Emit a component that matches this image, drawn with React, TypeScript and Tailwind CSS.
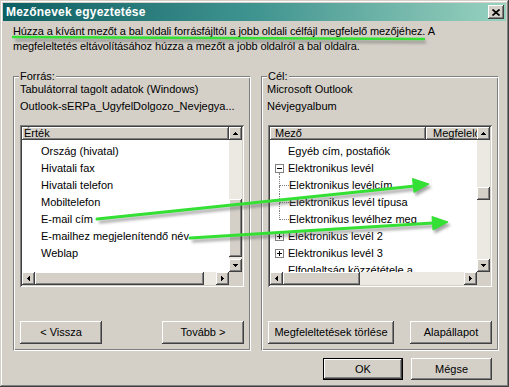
import type { ReactNode } from "react";

const raised =
  "bg-[#d4d0c8] shadow-[inset_-1px_-1px_0_#404040,inset_1px_1px_0_#ffffff,inset_-2px_-2px_0_#808080,inset_2px_2px_0_#d4d0c8]";
const sunken =
  "shadow-[inset_1px_1px_0_#808080,inset_-1px_-1px_0_#ffffff,inset_2px_2px_0_#404040,inset_-2px_-2px_0_#d4d0c8]";

type Dir = "up" | "down" | "left" | "right";

function Arrow({ dir }: { dir: Dir }) {
  const widths = [1, 3, 5];
  const vertical = dir === "up" || dir === "down";
  return (
    <svg width={vertical ? 5 : 3} height={vertical ? 3 : 5} shapeRendering="crispEdges">
      {widths.map((w, i) => {
        const pos = dir === "up" || dir === "left" ? i : 2 - i;
        const off = (5 - w) / 2;
        return vertical ? (
          <rect key={i} x={off} y={pos} width={w} height={1} fill="#000" />
        ) : (
          <rect key={i} x={pos} y={off} width={1} height={w} fill="#000" />
        );
      })}
    </svg>
  );
}

function ScrollBtn({ dir }: { dir: Dir }) {
  return (
    <div className={`w-[13px] h-[13px] shrink-0 flex items-center justify-center ${raised}`}>
      <Arrow dir={dir} />
    </div>
  );
}

function VScroll({ thumb }: { thumb: string }) {
  return (
    <div className="w-[13px] flex flex-col">
      <div className="h-[145px] flex flex-col">
        <ScrollBtn dir="up" />
        <div className="flex-1 bg-[#ece9e3] flex flex-col">
          <div className={`${thumb} ${raised}`} />
        </div>
        <ScrollBtn dir="down" />
      </div>
      <div className="h-[13px] bg-[#d4d0c8]" />
    </div>
  );
}

function HScroll({ thumb }: { thumb: string }) {
  return (
    <div className="h-[13px] flex">
      <ScrollBtn dir="left" />
      <div className="flex-1 bg-[#ece9e3] flex">
        <div className={`${thumb} h-[13px] ${raised}`} />
      </div>
      <ScrollBtn dir="right" />
    </div>
  );
}

function Btn({
  children,
  className,
  isDefault = false,
}: {
  children: ReactNode;
  className: string;
  isDefault?: boolean;
}) {
  return (
    <button
      className={`flex items-center justify-center text-[11px] text-black ${
        isDefault
          ? "border border-black bg-[#d4d0c8] shadow-[inset_-1px_-1px_0_#404040,inset_1px_1px_0_#ffffff,inset_-2px_-2px_0_#808080]"
          : raised
      } ${className}`}
    >
      {children}
    </button>
  );
}

function GroupBox({ label, children }: { label: string; children: ReactNode }) {
  return (
    <div className="relative w-[238px] h-[275px] border border-t-[#808080] border-l-[#808080] border-r-white border-b-white shadow-[inset_1px_1px_0_#ffffff,inset_-1px_-1px_0_#808080]">
      <span className="absolute -top-[7px] left-[5px] bg-[#d4d0c8] px-[1px] leading-[13px]">
        {label}
      </span>
      {children}
    </div>
  );
}

function ExpandBox({ open }: { open: boolean }) {
  return (
    <span className="relative w-[9px] h-[9px] border border-[#808080] bg-white flex items-center justify-center">
      <span className="w-[5px] h-[1px] bg-black" />
      {!open && <span className="absolute w-[1px] h-[5px] bg-black" />}
    </span>
  );
}

const sourceRows = [
  "Ország (hivatal)",
  "Hivatali fax",
  "Hivatali telefon",
  "Mobiltelefon",
  "E-mail cím",
  "E-mailhez megjelenítendő név",
  "Weblap",
];

const children = [
  "Elektronikus levélcím",
  "Elektronikus levél típusa",
  "Elektronikus levélhez meg",
];

export default function App() {
  return (
    <div className="relative w-[509px] h-[387px] overflow-hidden bg-[#d4d0c8] text-[11px] text-black font-['Liberation_Sans',Arial,sans-serif] shadow-[inset_-1px_-1px_0_#404040,inset_1px_1px_0_#d4d0c8,inset_-2px_-2px_0_#808080,inset_2px_2px_0_#ffffff]">
      {/* Title bar */}
      <div className="mx-[3px] mt-[3px] h-[18px] flex items-center justify-between pl-[3px] pr-[2px] bg-gradient-to-r from-[#0b5f63] via-[#3f9490] to-[#98d2bf]">
        <span className="text-white font-bold text-[12px] leading-[18px] tracking-[0.2px]">
          Mezőnevek egyeztetése
        </span>
        <div className={`w-[16px] h-[14px] flex items-center justify-center ${raised}`}>
          <svg width="8" height="7" viewBox="0 0 8 7">
            <path d="M0.5 0.5 L7.5 6.5 M7.5 0.5 L0.5 6.5" stroke="#000" strokeWidth="1.7" />
          </svg>
        </div>
      </div>

      {/* Instructions */}
      <div className="pl-[13px] pt-[3px] leading-[15px] whitespace-nowrap tracking-[-0.1px]">
        <div>Húzza a kívánt mezőt a bal oldali forrásfájltól a jobb oldali célfájl megfelelő mezőjéhez. A</div>
        <div>megfeleltetés eltávolításához húzza a mezőt a jobb oldalról a bal oldalra.</div>
      </div>

      {/* Group boxes */}
      <div className="flex gap-[10px] pl-[13px] mt-[22px]">
        <GroupBox label="Forrás:">
          <div className="pl-[6px] pt-[4px] leading-[17px] whitespace-nowrap">
            <div>Tabulátorral tagolt adatok (Windows)</div>
            <div>Outlook-sERPa_UgyfelDolgozo_Nevjegya...</div>
          </div>
          <div className={`ml-[6px] mt-[10px] w-[224px] h-[162px] p-[2px] bg-white flex ${sunken}`}>
            <div className="w-[207px] flex flex-col">
              <div className={`h-[13px] leading-[13px] pl-[2px] ${raised}`}>Érték</div>
              <div className="h-[132px] overflow-hidden bg-white pt-[3px]">
                {sourceRows.map((r) => (
                  <div key={r} className="h-[17px] leading-[17px] pl-[19px] whitespace-nowrap">
                    {r}
                  </div>
                ))}
              </div>
              <HScroll thumb="w-[169px]" />
            </div>
            <VScroll thumb="mt-[59px] h-[58px]" />
          </div>
          <div className="flex pl-[6px] mt-[34px]">
            <Btn className="w-[82px] h-[23px]">&lt; Vissza</Btn>
            <Btn className="w-[82px] h-[23px] ml-[60px]">Tovább &gt;</Btn>
          </div>
        </GroupBox>

        <GroupBox label="Cél:">
          <div className="pl-[5px] pt-[4px] leading-[17px] whitespace-nowrap">
            <div>Microsoft Outlook</div>
            <div>Névjegyalbum</div>
          </div>
          <div className={`ml-[6px] mt-[10px] w-[224px] h-[162px] p-[2px] bg-white flex ${sunken}`}>
            <div className="w-[207px] flex flex-col">
              <div className="h-[13px] leading-[13px] flex overflow-hidden whitespace-nowrap">
                <div className={`w-[156px] shrink-0 pl-[5px] ${raised}`}>Mező</div>
                <div className={`w-[80px] shrink-0 pl-[7px] ${raised}`}>Megfelelő</div>
              </div>
              <div className="h-[132px] overflow-hidden bg-white pt-[3px] whitespace-nowrap">
                <div className="h-[17px] leading-[17px] pl-[18px]">Egyéb cím, postafiók</div>
                <div className="h-[17px] flex items-stretch">
                  <div className="ml-[5px] w-[9px] flex flex-col items-center">
                    <div className="h-[4px]" />
                    <ExpandBox open />
                    <div className="flex-1 w-0 border-l border-dotted border-[#808080]" />
                  </div>
                  <span className="ml-[4px] leading-[17px]">Elektronikus levél</span>
                </div>
                {children.map((c, i) => (
                  <div key={c} className="h-[17px] flex items-stretch">
                    <div className="ml-[9px] w-[10px] flex flex-col">
                      <div className="h-[9px] border-l border-b border-dotted border-[#808080]" />
                      {i < children.length - 1 && (
                        <div className="flex-1 border-l border-dotted border-[#808080]" />
                      )}
                    </div>
                    <span className="leading-[17px]">{c}</span>
                  </div>
                ))}
                <div className="h-[17px] flex items-center">
                  <span className="ml-[5px]">
                    <ExpandBox open={false} />
                  </span>
                  <span className="ml-[4px] leading-[17px]">Elektronikus levél 2</span>
                </div>
                <div className="h-[17px] flex items-center">
                  <span className="ml-[5px]">
                    <ExpandBox open={false} />
                  </span>
                  <span className="ml-[4px] leading-[17px]">Elektronikus levél 3</span>
                </div>
                <div className="h-[17px] leading-[17px] pl-[18px]">Elfoglaltság közzététele a</div>
              </div>
              <HScroll thumb="w-[77px]" />
            </div>
            <VScroll thumb="mt-[47px] h-[13px]" />
          </div>
          <div className="flex pl-[6px] mt-[34px]">
            <Btn className="w-[126px] h-[23px]">Megfeleltetések törlése</Btn>
            <Btn className="w-[82px] h-[23px] ml-[16px]">Alapállapot</Btn>
          </div>
        </GroupBox>
      </div>

      {/* Dialog buttons */}
      <div className="flex justify-end gap-[8px] pr-[17px] mt-[7px]">
        <Btn isDefault className="w-[80px] h-[22px]">OK</Btn>
        <Btn className="w-[81px] h-[22px]">Mégse</Btn>
      </div>

      {/* Green annotation strokes drawn on top of the screenshot */}
      <svg className="absolute inset-0 pointer-events-none" width="509" height="387">
        <defs>
          <filter id="soft" x="-5%" y="-50%" width="110%" height="200%">
            <feGaussianBlur stdDeviation="1.4" />
          </filter>
        </defs>
        <g transform="translate(2,3)" filter="url(#soft)" opacity="0.55" fill="#5a5a5a" stroke="#5a5a5a">
          <path d="M13 37 L424 39" strokeWidth="2.5" fill="none" />
          <path d="M97 219 L415 186" strokeWidth="3" fill="none" />
          <path d="M429 184 L412.5 178.5 L414 192.5 Z" />
          <path d="M190 238 L433 223" strokeWidth="3" fill="none" />
          <path d="M448 222 L432 216.5 L433 230 Z" />
        </g>
        <g fill="#33e033" stroke="#33e033">
          <path d="M13 37 L424 39" strokeWidth="2.5" fill="none" strokeLinecap="round" />
          <path d="M97 219 L415 186" strokeWidth="3" fill="none" strokeLinecap="round" />
          <path d="M429 184 L412.5 178.5 L414 192.5 Z" strokeWidth="1" />
          <path d="M190 238 L433 223" strokeWidth="3" fill="none" strokeLinecap="round" />
          <path d="M448 222 L432 216.5 L433 230 Z" strokeWidth="1" />
        </g>
      </svg>
    </div>
  );
}
